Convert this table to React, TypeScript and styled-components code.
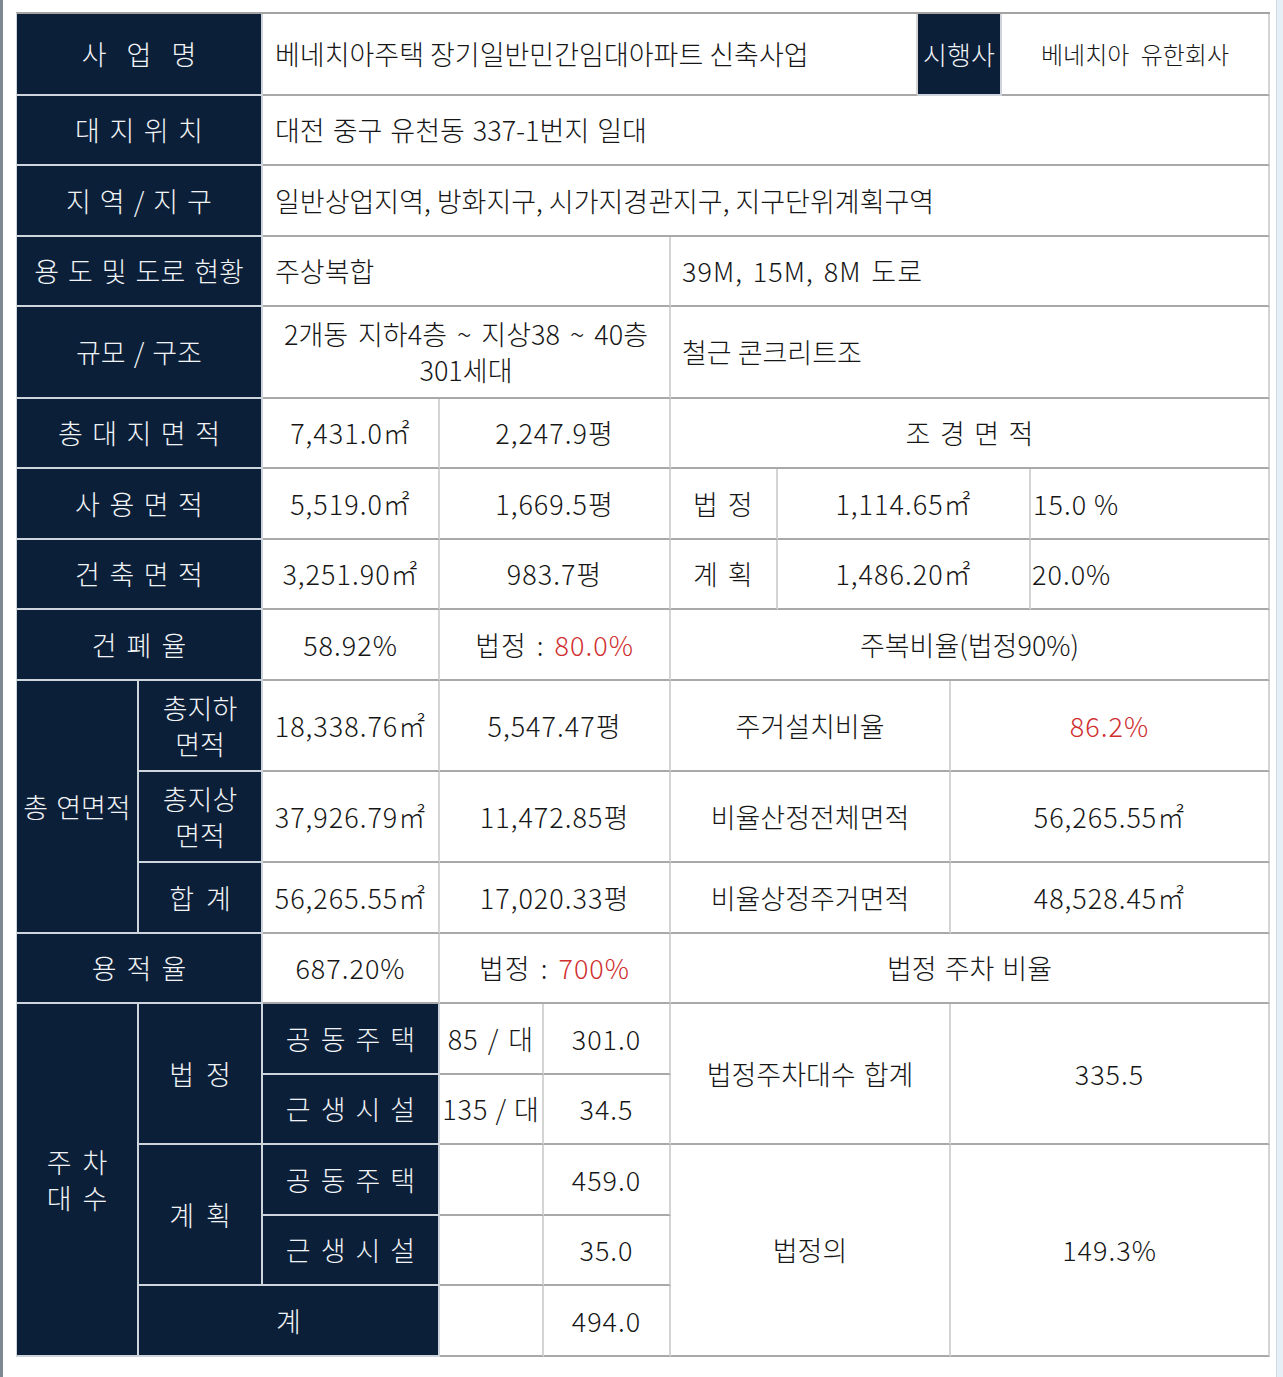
import styled, { createGlobalStyle } from "styled-components";

const GlobalStyle = createGlobalStyle`
  html, body {
    margin: 0;
    padding: 0;
    background: #ffffff;
  }
  body {
    font-family: "Noto Sans CJK KR", "Noto Sans", sans-serif;
    font-weight: 300;
  }
`;

const Page = styled.div`
  width: 1283px;
  height: 1377px;
  box-sizing: border-box;
  padding: 12px 0 0 13px;
  border-left: 3px solid #7e8893;
  position: relative;
  &::after {
    content: "";
    position: absolute;
    top: 0;
    right: 0;
    width: 6px;
    height: 100%;
    background: #e6eff6;
    border-left: 1px solid #cfdbe6;
  }
`;

const Table = styled.div`
  display: grid;
  width: max-content;
  grid-template-columns: 122px 124px 177px 104px 127px 107px 140px 33px 51px 29px 239px;
  grid-template-rows: 82px 70px 71px 70px 92px 70px 71px 70px 71px 91px 91px 71px 70px 71px 70px 71px 70px 71px;
  border-top: 2px solid #a4a4a4;
  border-left: 1px solid #cdd4dc;
`;

type Place = {
  $c: string;
  $r: string;
  $align?: "left" | "center";
  $pad?: number;
  $spacing?: number;
  $num?: boolean;
  $size?: number;
};

const Cell = styled.div<Place>`
  grid-column: ${(p) => p.$c};
  grid-row: ${(p) => p.$r};
  box-sizing: border-box;
  display: flex;
  align-items: center;
  justify-content: ${(p) => (p.$align === "left" ? "flex-start" : "center")};
  text-align: ${(p) => (p.$align === "left" ? "left" : "center")};
  padding-left: ${(p) => p.$pad ?? 0}px;
  font-size: ${(p) => p.$size ?? 27}px;
  line-height: 36px;
  letter-spacing: ${(p) => (p.$num ? "1px" : "0")};
  word-spacing: ${(p) => p.$spacing ?? 0}px;
  white-space: pre-line;
`;

// 헤더 칸은 글자 사이를 기본적으로 조금 더 띄운다
const Head = styled(Cell)`
  background: #0b1f38;
  color: #f1f3f6;
  border-right: 2px solid #cdd4dc;
  border-bottom: 2px solid #cdd4dc;
  word-spacing: ${(p) => p.$spacing ?? 3.5}px;
`;

const Data = styled(Cell)`
  background: #ffffff;
  color: #161616;
  border-right: 2px solid #d4d4d4;
  border-bottom: 2px solid #a9a9a9;
`;

const Red = styled.span`
  color: #cf2f2f;
`;

const Colon = styled.span`
  margin: 0 10px;
`;

function App() {
  return (
    <>
      <GlobalStyle />
      <Page>
        <Table>
          {/* 사업 개요 */}
          <Head $c="1 / 3" $r="1" $spacing={14}>사 업 명</Head>
          <Data $c="3 / 8" $r="1" $align="left" $pad={12}>
            베네치아주택 장기일반민간임대아파트 신축사업
          </Data>
          <Head $c="8 / 10" $r="1" $size={26}>시행사</Head>
          <Data $c="10 / 12" $r="1" $size={24} $spacing={6}>베네치아 유한회사</Data>

          <Head $c="1 / 3" $r="2">대 지 위 치</Head>
          <Data $c="3 / 12" $r="2" $align="left" $pad={12} $spacing={2}>
            대전 중구 유천동 337-1번지 일대
          </Data>

          <Head $c="1 / 3" $r="3" $spacing={3}>지 역 / 지 구</Head>
          <Data $c="3 / 12" $r="3" $align="left" $pad={12}>
            일반상업지역, 방화지구, 시가지경관지구, 지구단위계획구역
          </Data>

          <Head $c="1 / 3" $r="4" $spacing={3}>용 도 및 도로 현황</Head>
          <Data $c="3 / 6" $r="4" $align="left" $pad={12}>주상복합</Data>
          <Data $c="6 / 12" $r="4" $align="left" $pad={11} $num $spacing={3}>
            39M, 15M, 8M 도로
          </Data>

          <Head $c="1 / 3" $r="5" $spacing={2}>규모 / 구조</Head>
          <Data $c="3 / 6" $r="5" $spacing={4}>{"2개동 지하4층 ~ 지상38 ~ 40층\n301세대"}</Data>
          <Data $c="6 / 12" $r="5" $align="left" $pad={11}>철근 콘크리트조</Data>

          {/* 면적 */}
          <Head $c="1 / 3" $r="6">총 대 지 면 적</Head>
          <Data $c="3 / 4" $r="6" $num>7,431.0㎡</Data>
          <Data $c="4 / 6" $r="6" $num>2,247.9평</Data>
          <Data $c="6 / 12" $r="6" $spacing={3.5}>조 경 면 적</Data>

          <Head $c="1 / 3" $r="7">사 용 면 적</Head>
          <Data $c="3 / 4" $r="7" $num>5,519.0㎡</Data>
          <Data $c="4 / 6" $r="7" $num>1,669.5평</Data>
          <Data $c="6 / 7" $r="7" $align="left" $pad={22} $spacing={4}>법 정</Data>
          <Data $c="7 / 11" $r="7" $num>1,114.65㎡</Data>
          <Data $c="11 / 12" $r="7" $align="left" $pad={2} $num>15.0 %</Data>

          <Head $c="1 / 3" $r="8">건 축 면 적</Head>
          <Data $c="3 / 4" $r="8" $num>3,251.90㎡</Data>
          <Data $c="4 / 6" $r="8" $num>983.7평</Data>
          <Data $c="6 / 7" $r="8" $align="left" $pad={22} $spacing={4}>계 획</Data>
          <Data $c="7 / 11" $r="8" $num>1,486.20㎡</Data>
          <Data $c="11 / 12" $r="8" $align="left" $pad={1} $num>20.0%</Data>

          <Head $c="1 / 3" $r="9" $spacing={4}>건 폐 율</Head>
          <Data $c="3 / 4" $r="9" $num>58.92%</Data>
          <Data $c="4 / 6" $r="9" $num>
            법정<Colon>:</Colon>
            <Red>80.0%</Red>
          </Data>
          <Data $c="6 / 12" $r="9">주복비율(법정90%)</Data>

          {/* 연면적 */}
          <Head $c="1 / 2" $r="10 / 13" $spacing={2}>총 연면적</Head>
          <Head $c="2 / 3" $r="10">{"총지하\n면적"}</Head>
          <Data $c="3 / 4" $r="10" $num>18,338.76㎡</Data>
          <Data $c="4 / 6" $r="10" $num>5,547.47평</Data>
          <Data $c="6 / 9" $r="10">주거설치비율</Data>
          <Data $c="9 / 12" $r="10" $num>
            <Red>86.2%</Red>
          </Data>

          <Head $c="2 / 3" $r="11">{"총지상\n면적"}</Head>
          <Data $c="3 / 4" $r="11" $num>37,926.79㎡</Data>
          <Data $c="4 / 6" $r="11" $num>11,472.85평</Data>
          <Data $c="6 / 9" $r="11">비율산정전체면적</Data>
          <Data $c="9 / 12" $r="11" $num>56,265.55㎡</Data>

          <Head $c="2 / 3" $r="12" $spacing={6}>합 계</Head>
          <Data $c="3 / 4" $r="12" $num>56,265.55㎡</Data>
          <Data $c="4 / 6" $r="12" $num>17,020.33평</Data>
          <Data $c="6 / 9" $r="12">비율상정주거면적</Data>
          <Data $c="9 / 12" $r="12" $num>48,528.45㎡</Data>

          <Head $c="1 / 3" $r="13" $spacing={4}>용 적 율</Head>
          <Data $c="3 / 4" $r="13" $num>687.20%</Data>
          <Data $c="4 / 6" $r="13" $num>
            법정<Colon>:</Colon>
            <Red>700%</Red>
          </Data>
          <Data $c="6 / 12" $r="13" $spacing={2}>법정 주차 비율</Data>

          {/* 주차 */}
          <Head $c="1 / 2" $r="14 / 19" $spacing={5}>{"주 차\n대 수"}</Head>
          <Head $c="2 / 3" $r="14 / 16" $spacing={6}>법 정</Head>
          <Head $c="3 / 4" $r="14" $spacing={4}>공 동 주 택</Head>
          <Data $c="4 / 5" $r="14" $num $spacing={2}>85 / 대</Data>
          <Data $c="5 / 6" $r="14" $num>301.0</Data>
          <Data $c="6 / 9" $r="14 / 16" $spacing={2}>법정주차대수 합계</Data>
          <Data $c="9 / 12" $r="14 / 16" $num>335.5</Data>

          <Head $c="3 / 4" $r="15" $spacing={4}>근 생 시 설</Head>
          <Data $c="4 / 5" $r="15" $num>135 / 대</Data>
          <Data $c="5 / 6" $r="15" $num>34.5</Data>

          <Head $c="2 / 3" $r="16 / 18" $spacing={6}>계 획</Head>
          <Head $c="3 / 4" $r="16" $spacing={4}>공 동 주 택</Head>
          <Data $c="4 / 5" $r="16" />
          <Data $c="5 / 6" $r="16" $num>459.0</Data>
          <Data $c="6 / 9" $r="16 / 19">법정의</Data>
          <Data $c="9 / 12" $r="16 / 19" $num>149.3%</Data>

          <Head $c="3 / 4" $r="17" $spacing={4}>근 생 시 설</Head>
          <Data $c="4 / 5" $r="17" />
          <Data $c="5 / 6" $r="17" $num>35.0</Data>

          <Head $c="2 / 4" $r="18">계</Head>
          <Data $c="4 / 5" $r="18" />
          <Data $c="5 / 6" $r="18" $num>494.0</Data>
        </Table>
      </Page>
    </>
  );
}

export default App;
